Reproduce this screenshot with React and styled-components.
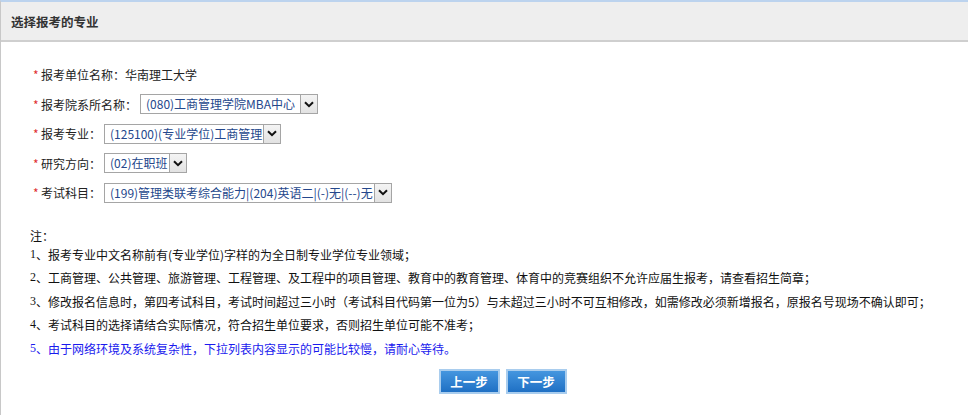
import React from 'react';
import styled, { createGlobalStyle } from 'styled-components';

const GlobalStyle = createGlobalStyle`
  html, body {
    margin: 0;
    padding: 0;
    background: #fff;
  }
  body {
    font-family: "Noto Sans CJK SC", "Liberation Sans", sans-serif;
    font-size: 12px;
    color: #222;
  }
`;

const fields = [
  { label: '报考院系所名称：', value: '(080)工商管理学院MBA中心', width: 159 },
  { label: '报考专业：', value: '(125100)(专业学位)工商管理', width: 158 },
  { label: '研究方向：', value: '(02)在职班', width: 64 },
  { label: '考试科目：', value: '(199)管理类联考综合能力|(204)英语二|(-)无|(--)无', width: 269 },
];

const notes = [
  { n: '1', text: '、报考专业中文名称前有(专业学位)字样的为全日制专业学位专业领域；' },
  { n: '2', text: '、工商管理、公共管理、旅游管理、工程管理、及工程中的项目管理、教育中的教育管理、体育中的竞赛组织不允许应届生报考，请查看招生简章；' },
  { n: '3', text: '、修改报名信息时，第四考试科目，考试时间超过三小时（考试科目代码第一位为5）与未超过三小时不可互相修改，如需修改必须新增报名，原报名号现场不确认即可；' },
  { n: '4', text: '、考试科目的选择请结合实际情况，符合招生单位要求，否则招生单位可能不准考；' },
  { n: '5', text: '、由于网络环境及系统复杂性，下拉列表内容显示的可能比较慢，请耐心等待。', blue: true },
];

function App() {
  return (
    <>
      <GlobalStyle />
      <Panel>
        <Header>选择报考的专业</Header>
        <Form>
          <Row>
            <Star>*</Star>
            <Label>报考单位名称：华南理工大学</Label>
          </Row>
          {fields.map((f, i) => (
            <Row key={i}>
              <Star>*</Star>
              <Label>{f.label}</Label>
              <Select>
                <SelectText style={{ width: f.width }}>{f.value}</SelectText>
                <Arrow>
                  <svg width="10" height="7" viewBox="0 0 10 7">
                    <path d="M1 1.2 L5 5.2 L9 1.2" fill="none" stroke="#111" strokeWidth="2" />
                  </svg>
                </Arrow>
              </Select>
            </Row>
          ))}
        </Form>
        <Notes>
          <NoteTitle>注：</NoteTitle>
          {notes.map((n, i) => (
            <NoteLine key={i} $blue={n.blue}>
              <Num>{n.n}</Num>
              {n.text}
            </NoteLine>
          ))}
        </Notes>
        <Buttons>
          <Button>上一步</Button>
          <Button>下一步</Button>
        </Buttons>
      </Panel>
    </>
  );
}

export default App;

const Panel = styled.div`
  width: 968px;
  height: 415px;
  box-sizing: border-box;
  border-left: 1px solid #c8c8c8;
  border-top: 2px solid #bcd3ee;
  overflow: hidden;
`;

const Header = styled.div`
  height: 38px;
  background: #eeeeee;
  border-bottom: 2px solid #cfcfcf;
  display: flex;
  align-items: center;
  padding-left: 10px;
  font-weight: bold;
  font-size: 12.5px;
  color: #333;
`;

const Form = styled.div`
  padding: 22px 0 0 32px;
  display: flex;
  flex-direction: column;
  gap: 8.5px;
`;

const Row = styled.div`
  display: flex;
  align-items: center;
  height: 21px;
`;

const Star = styled.span`
  color: #e03030;
  width: 8px;
  font-size: 12px;
`;

const Label = styled.span`
  color: #222;
  margin-right: 3px;
  white-space: nowrap;
`;

const Select = styled.div`
  display: flex;
  height: 20px;
  box-sizing: border-box;
  border: 1px solid #a5a5a5;
  background: #fff;
`;

const SelectText = styled.div`
  box-sizing: border-box;
  padding-left: 5px;
  color: #24478c;
  line-height: 18px;
  white-space: nowrap;
  overflow: hidden;
  font-size: 12px;
`;

const Arrow = styled.div`
  width: 17px;
  box-sizing: border-box;
  border-left: 1px solid #a5a5a5;
  background: linear-gradient(#f4f4f4, #e2e2e2);
  display: flex;
  align-items: center;
  justify-content: center;
`;

const Notes = styled.div`
  padding: 25.5px 0 0 29px;
`;

const NoteTitle = styled.div`
  height: 14px;
  line-height: 14px;
  color: #111;
`;

const NoteLine = styled.div`
  display: flex;
  align-items: center;
  height: 23.5px;
  white-space: nowrap;
  color: ${p => (p.$blue ? '#1a1aee' : '#111')};
`;

const Num = styled.span`
  font-family: "Liberation Serif", serif;
  font-size: 12px;
`;

const Buttons = styled.div`
  display: flex;
  justify-content: center;
  gap: 6px;
  padding: 9px 0 0 0;
  margin-left: 36px;
`;

const Button = styled.button`
  width: 61px;
  height: 25px;
  box-sizing: border-box;
  border: 2px solid #a9cdee;
  background: linear-gradient(#4596df, #1f70c4);
  color: #fff;
  font-family: "Noto Sans CJK SC", sans-serif;
  font-weight: bold;
  font-size: 12.5px;
  padding: 0;
  cursor: pointer;
`;
